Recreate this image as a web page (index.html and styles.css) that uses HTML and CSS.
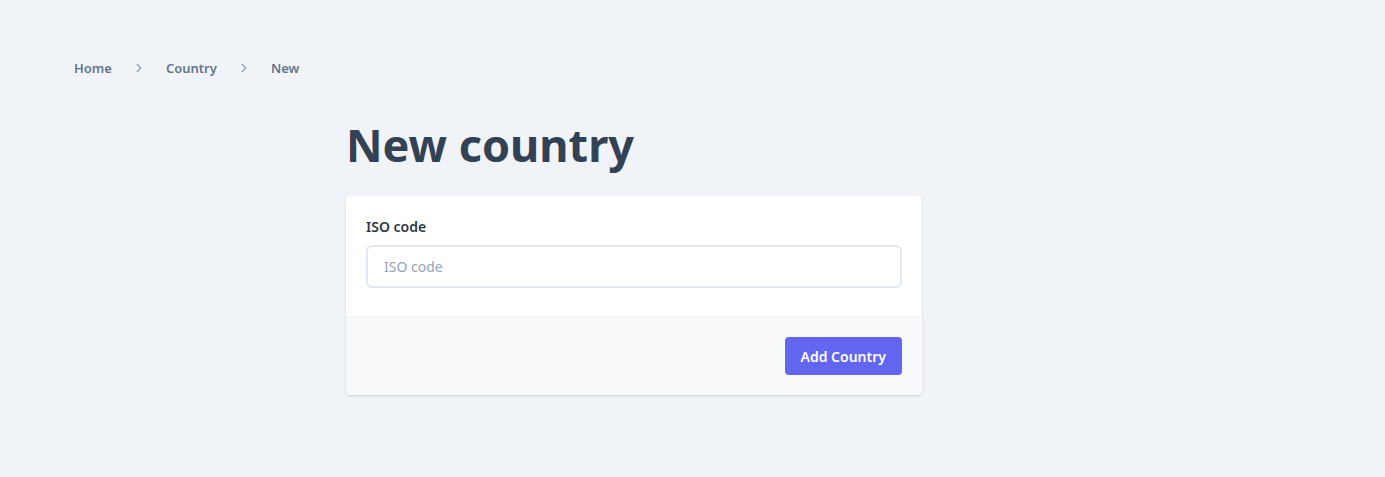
FILE: index.html
```html
<!DOCTYPE html>
<html lang="en">
<head>
<meta charset="utf-8">
<title>New country</title>
<link rel="stylesheet" href="styles.css">
</head>
<body>
<div class="page">
  <nav class="breadcrumb">
    <a class="crumb" href="#">Home</a>
    <svg class="sep" viewBox="0 0 20 20" width="14" height="14" aria-hidden="true"><path d="M7.5 5l5 5-5 5" fill="none" stroke="currentColor" stroke-width="2" stroke-linecap="round" stroke-linejoin="round"/></svg>
    <a class="crumb" href="#">Country</a>
    <svg class="sep" viewBox="0 0 20 20" width="14" height="14" aria-hidden="true"><path d="M7.5 5l5 5-5 5" fill="none" stroke="currentColor" stroke-width="2" stroke-linecap="round" stroke-linejoin="round"/></svg>
    <span class="crumb current">New</span>
  </nav>
  <main class="content">
    <h1 class="title">New country</h1>
    <form class="card">
      <div class="card-body">
        <label class="label" for="iso">ISO code</label>
        <input class="input" id="iso" type="text" placeholder="ISO code">
      </div>
      <div class="card-footer">
        <button class="btn" type="button">Add Country</button>
      </div>
    </form>
  </main>
</div>
</body>
</html>
```
FILE: styles.css
```css
* { box-sizing: border-box; }
html, body { margin: 0; padding: 0; }
body {
  background: #f0f4f8;
  font-family: "Noto Sans", "Open Sans", sans-serif;
  color: #2d3748;
  height: 477px;
}
.page {
  padding: 56px 74px 0;
}
.breadcrumb {
  display: flex;
  align-items: center;
  gap: 20px;
  height: 23px;
  font-size: 13px;
  font-weight: 600;
  color: #64748b;
}
.crumb { color: #64748b; text-decoration: none; }
.sep { color: #94a3b8; }
.content {
  width: 576px;
  margin: 33px 0 0 272px;
}
.title {
  margin: 0 0 18px;
  font-size: 45px;
  line-height: 66px;
  font-weight: 700;
  color: #334155;
}
.card {
  background: #fff;
  border-radius: 4px;
  box-shadow: 0 1px 3px rgba(0,0,0,0.1), 0 1px 2px rgba(0,0,0,0.06);
  overflow: hidden;
}
.card-body {
  padding: 22px 20px 28px;
  display: flex;
  flex-direction: column;
}
.label {
  font-size: 14px;
  font-weight: 600;
  color: #2d3748;
  line-height: 18px;
  margin-bottom: 9px;
}
.input {
  height: 43px;
  border: 2px solid #e2e8f0;
  border-radius: 6px;
  padding: 0 16px;
  font-family: inherit;
  font-size: 14px;
  color: #2d3748;
  background: #fff;
}
.input::placeholder { color: #94a3b8; }
.card-footer {
  background: #f7f9fb;
  border-top: 1px solid #edf2f7;
  padding: 20px;
  display: flex;
  justify-content: flex-end;
}
.btn {
  height: 38px;
  padding: 0 16px;
  background: #6366f1;
  color: #fff;
  border: 0;
  border-radius: 4px;
  font-family: inherit;
  font-size: 14px;
  font-weight: 600;
}
```
